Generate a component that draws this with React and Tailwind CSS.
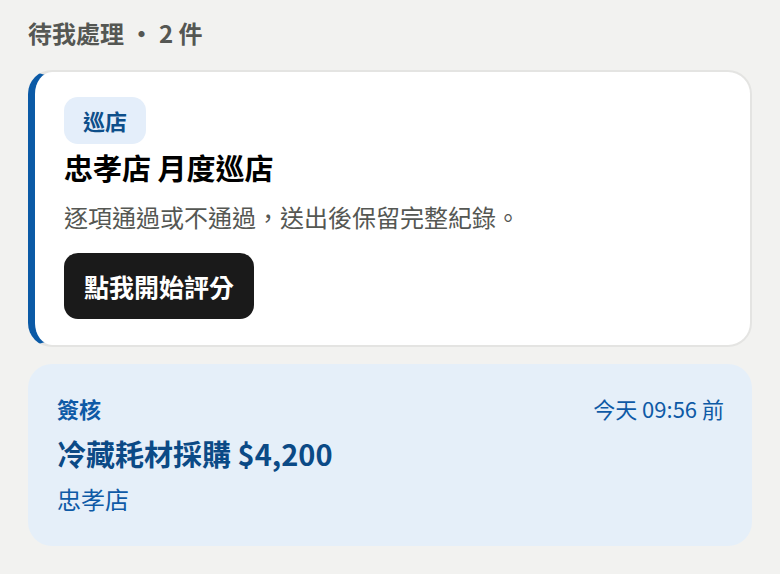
export default function App() {
  return (
    <div
      className="min-h-screen bg-[#f2f2f0] px-7 pt-[16px] pb-6"
      style={{ fontFamily: '"Noto Sans CJK TC", "Noto Sans", sans-serif' }}
    >
      {/* Header */}
      <h1 className="text-[24px] leading-[34px] font-bold text-[#555753] mb-[20px]">
        待我處理 • 2 件
      </h1>

      {/* Inspection card */}
      <div className="bg-white border-2 border-[#e4e4e2] border-l-[7px] border-l-[#0b5aa6] rounded-[24px] pl-[29px] pr-6 pt-[25px] pb-[26px]">
        <span className="inline-block bg-[#e4eefa] text-[#0e4f8a] text-[22px] leading-[27px] font-bold px-[19px] py-[10px] rounded-[14px]">
          巡店
        </span>
        <h2 className="mt-[3px] text-[29px] leading-[40px] font-bold text-black">
          忠孝店 月度巡店
        </h2>
        <p className="mt-[13px] text-[24px] leading-[34px] text-[#555753]">
          逐項通過或不通過，送出後保留完整紀錄。
        </p>
        <button className="mt-[19px] bg-[#1a1a1a] text-white text-[25px] leading-[34px] font-bold px-[20px] py-[16px] rounded-[14px]">
          點我開始評分
        </button>
      </div>

      {/* Approval card */}
      <div className="mt-[17px] bg-[#e5eff9] rounded-[24px] pl-[29px] pr-[28px] pt-[29px] pb-[30px]">
        <div className="flex items-center justify-between">
          <span className="text-[22px] leading-[30px] font-bold text-[#0e5aa6]">簽核</span>
          <span className="text-[22px] leading-[30px] text-[#0e5aa6]">今天 09:56 前</span>
        </div>
        <div className="mt-[10px] text-[29px] leading-[40px] font-bold text-[#0b4a86]">
          冷藏耗材採購 $4,200
        </div>
        <div className="mt-[9px] text-[24px] leading-[34px] text-[#0e5aa6]">忠孝店</div>
      </div>
    </div>
  );
}
